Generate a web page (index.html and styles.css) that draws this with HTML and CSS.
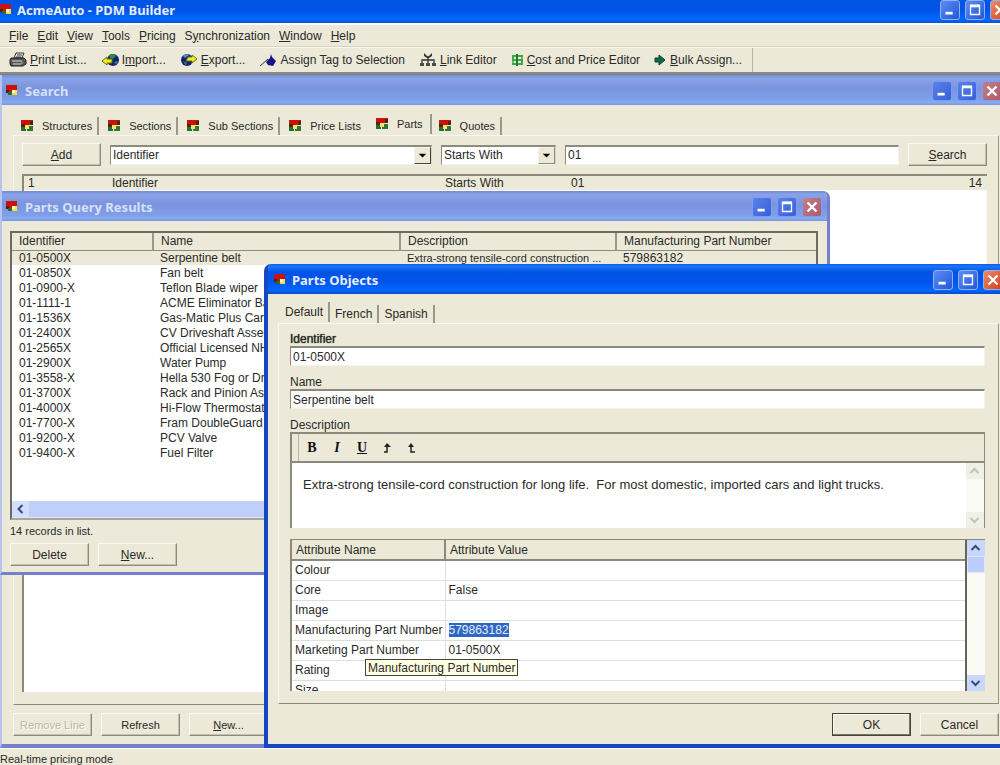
FILE: index.html
```html
<!DOCTYPE html>
<html lang="en">
<head>
<meta charset="utf-8">
<title>AcmeAuto - PDM Builder</title>
<link rel="stylesheet" href="styles.css">
</head>
<body>
<svg class="defs" aria-hidden="true">
  <symbol id="logo" viewBox="0 0 12 12"><path fill="#c81408" d="M0 0h11v5H7v3H0z"/><path fill="#5c1a08" d="M0 5h3v3H0z"/><path fill="#27702f" d="M2 7h4v3H2z"/><path fill="#ffd84a" d="M6 5h5v5H6z"/><path fill="#fff8d0" d="M6 5h3v3H6z"/></symbol>
  <symbol id="tabicon" viewBox="0 0 12 12"><path fill="#c81408" d="M0 0h12v5H0z"/><path fill="#5c2208" d="M0 4h4v3H0zM9 1h3v4H9z"/><path fill="#1f7038" d="M0 7h5v4H0z"/><path fill="#ffe06a" d="M4 5h4v4H4z"/><path fill="#2c7a30" d="M8 6h4v5H6V9h2z"/></symbol>
  <symbol id="min" viewBox="0 0 20 20"><path fill="#fff" d="M5 12h8v3H5z"/></symbol>
  <symbol id="max" viewBox="0 0 20 20"><path fill="none" stroke="#fff" stroke-width="1.500" d="M5 5h10v10H5z"/><path fill="#fff" d="M4.500 4h11v3h-11z"/></symbol>
  <symbol id="close" viewBox="0 0 20 20"><path fill="none" stroke="#fff" stroke-width="2.600" d="M5 5l10 10M15 5L5 15"/></symbol>
  <symbol id="drop" viewBox="0 0 16 16"><path d="M4 6h8l-4 4z"/></symbol>
</svg>

<div class="app">
  <header class="titlebar app-title">
    <svg class="logo"><use href="#logo"/></svg>
    <h1>AcmeAuto - PDM Builder</h1>
    <div class="controls">
      <button aria-label="Minimize"><svg><use href="#min"/></svg></button>
      <button aria-label="Maximize"><svg><use href="#max"/></svg></button>
      <button class="close" aria-label="Close"><svg><use href="#close"/></svg></button>
    </div>
  </header>

  <nav class="menubar">
    <button><u>F</u>ile</button><button><u>E</u>dit</button><button><u>V</u>iew</button><button><u>T</u>ools</button><button><u>P</u>ricing</button><button>S<u>y</u>nchronization</button><button><u>W</u>indow</button><button><u>H</u>elp</button>
  </nav>

  <div class="toolbar">
    <div class="tools">
      <button><svg viewBox="0 0 18 16"><path fill="#eee" stroke="#333" d="M5 6l2-5h8l-2 5z"/><path stroke="#333" d="M8 3h5M7 5h5"/><path fill="#555" stroke="#222" d="M2 6h13l2 2v4l-3 2H2l-1-2V8z"/><path stroke="#ddd" d="M3 9h10M4 12h8"/><path stroke="#c8c040" d="M12 11h2"/></svg><span><u>P</u>rint List...</span></button>
      <button><svg viewBox="0 0 18 16"><circle cx="12" cy="8" r="6" fill="#14207a"/><path fill="#2f8a3a" d="M8 3c3-2 6-1 7 1l-3 3-3-1zM13 10l4-1-2 4z"/><path fill="#f4ee20" stroke="#6c6a10" d="M1 9l5-4v2h5v4H6v2z"/></svg><span>I<u>m</u>port...</span></button>
      <button><svg viewBox="0 0 18 16"><circle cx="7" cy="8" r="6" fill="#14207a"/><path fill="#4f9cc0" d="M3 4c2-2 5-2 6-1L5 6z"/><path fill="#2f8a3a" d="M3 9l4 2-1 3z"/><path fill="#f4ee20" stroke="#6c6a10" d="M17 7l-5-4v2H8l-2 4h6v2z"/></svg><span><u>E</u>xport...</span></button>
      <button><svg viewBox="0 0 18 16"><path stroke="#333" d="M1 14L9 7"/><path fill="#16128c" d="M12 2l1 3 4 4-3 5-5-1-2-3 4-4z"/></svg><span>Assign Tag to Selection</span></button>
      <button><svg viewBox="0 0 18 16"><path fill="none" stroke="#333" stroke-width="1.300" d="M9 4v8M3 12V8h12v4"/><path fill="#333" d="M5 1l4 4 4-4v3l-3 2H8L5 4z"/><path fill="#445040" d="M1 11h4v3H1zM7 11h4v3H7zM13 11h4v3h-4z"/></svg><span><u>L</u>ink Editor</span></button>
      <button><svg class="narrow" viewBox="0 0 13 16"><path fill="none" stroke="#37ac44" stroke-width="2" d="M12 4H2v4h9v4H1"/><path fill="none" stroke="#37ac44" stroke-width="1.500" d="M11 4v8M2 4v8"/><path stroke="#1f7a2a" stroke-width="2" d="M6 2v12"/></svg><span><u>C</u>ost and Price Editor</span></button>
      <button><svg class="narrow" viewBox="0 0 13 16"><path fill="#0f6b4a" stroke="#063c30" d="M1 6h4V3l6 5-6 5v-3H1z"/></svg><span><u>B</u>ulk Assign...</span></button>
    </div>
  </div>

  <main class="workspace">
    <section class="window search-window">
      <header class="titlebar inactive">
        <svg class="logo"><use href="#logo"/></svg>
        <h2>Search</h2>
        <div class="controls">
          <button aria-label="Minimize"><svg><use href="#min"/></svg></button>
          <button aria-label="Maximize"><svg><use href="#max"/></svg></button>
          <button class="close" aria-label="Close"><svg><use href="#close"/></svg></button>
        </div>
      </header>
      <div class="search-body">
        <div class="tabs icon-tabs">
          <button><svg><use href="#tabicon"/></svg>Structures</button>
          <button><svg><use href="#tabicon"/></svg>Sections</button>
          <button><svg><use href="#tabicon"/></svg>Sub Sections</button>
          <button class="before"><svg><use href="#tabicon"/></svg>Price Lists</button>
          <button class="current"><svg><use href="#tabicon"/></svg>Parts</button>
          <button class="after"><svg><use href="#tabicon"/></svg>Quotes</button>
        </div>
        <div class="search-pane">
          <div class="criteria">
            <button class="btn"><span><u>A</u>dd</span></button>
            <div class="combo raised"><select aria-label="Field"><option>Identifier</option></select><svg><use href="#drop"/></svg></div>
            <div class="combo"><select aria-label="Operator"><option>Starts With</option></select><svg><use href="#drop"/></svg></div>
            <input class="field" aria-label="Value" value="01">
            <button class="btn"><span><u>S</u>earch</span></button>
          </div>
          <div class="criteria-list">
            <table>
              <colgroup><col class="c-num"><col class="c-field"><col class="c-op"><col><col class="c-count"></colgroup>
              <tr><td>1</td><td>Identifier</td><td>Starts With</td><td>01</td><td class="num">14</td></tr>
            </table>
          </div>
        </div>
        <div class="search-buttons">
          <button class="btn" disabled>Remove Line</button>
          <button class="btn">Refresh</button>
          <button class="btn"><span><u>N</u>ew...</span></button>
        </div>
      </div>
    </section>

    <section class="window query-window">
      <header class="titlebar inactive">
        <svg class="logo"><use href="#logo"/></svg>
        <h2>Parts Query Results</h2>
        <div class="controls">
          <button aria-label="Minimize"><svg><use href="#min"/></svg></button>
          <button aria-label="Maximize"><svg><use href="#max"/></svg></button>
          <button class="close" aria-label="Close"><svg><use href="#close"/></svg></button>
        </div>
      </header>
      <div class="query-body">
        <div class="results">
          <table>
            <colgroup><col class="r-id"><col class="r-name"><col class="r-desc"><col></colgroup>
            <thead><tr><th>Identifier</th><th>Name</th><th>Description</th><th>Manufacturing Part Number</th></tr></thead>
            <tbody>
              <tr class="chosen"><td>01-0500X</td><td>Serpentine belt</td><td class="summary">Extra-strong tensile-cord construction ...</td><td>579863182</td></tr>
              <tr><td>01-0850X</td><td>Fan belt</td><td></td><td></td></tr>
              <tr><td>01-0900-X</td><td>Teflon Blade wiper</td><td></td><td></td></tr>
              <tr><td>01-1111-1</td><td>ACME Eliminator Bat</td><td></td><td></td></tr>
              <tr><td>01-1536X</td><td>Gas-Matic Plus Car S</td><td></td><td></td></tr>
              <tr><td>01-2400X</td><td>CV Driveshaft Assem</td><td></td><td></td></tr>
              <tr><td>01-2565X</td><td>Official Licensed NH</td><td></td><td></td></tr>
              <tr><td>01-2900X</td><td>Water Pump</td><td></td><td></td></tr>
              <tr><td>01-3558-X</td><td>Hella 530 Fog or Driv</td><td></td><td></td></tr>
              <tr><td>01-3700X</td><td>Rack and Pinion Ass</td><td></td><td></td></tr>
              <tr><td>01-4000X</td><td>Hi-Flow Thermostat</td><td></td><td></td></tr>
              <tr><td>01-7700-X</td><td>Fram DoubleGuard O</td><td></td><td></td></tr>
              <tr><td>01-9200-X</td><td>PCV Valve</td><td></td><td></td></tr>
              <tr><td>01-9400-X</td><td>Fuel Filter</td><td></td><td></td></tr>
            </tbody>
          </table>
          <div class="hscroll"><button aria-label="Scroll left"><svg viewBox="0 0 16 16"><path d="M10 4L6 8l4 4"/></svg></button></div>
        </div>
        <p class="count">14 records in list.</p>
        <div class="query-buttons">
          <button class="btn">Delete</button>
          <button class="btn"><span><u>N</u>ew...</span></button>
        </div>
      </div>
    </section>

    <section class="window dialog">
      <header class="titlebar">
        <svg class="logo"><use href="#logo"/></svg>
        <h2>Parts Objects</h2>
        <div class="controls">
          <button aria-label="Minimize"><svg><use href="#min"/></svg></button>
          <button aria-label="Maximize"><svg><use href="#max"/></svg></button>
          <button class="close" aria-label="Close"><svg><use href="#close"/></svg></button>
        </div>
      </header>
      <div class="dialog-body">
        <div class="tabs lang-tabs">
          <button class="current">Default</button>
          <button>French</button>
          <button>Spanish</button>
        </div>
        <form class="dialog-pane">
          <label class="strong" for="ident">Identifier</label>
          <input class="field" id="ident" value="01-0500X">
          <label for="name">Name</label>
          <input class="field" id="name" value="Serpentine belt">
          <label for="desc">Description</label>
          <div class="editor">
            <div class="format">
              <button type="button"><b>B</b></button>
              <button type="button"><b><i>I</i></b></button>
              <button type="button"><b><u>U</u></b></button>
              <button type="button" aria-label="Superscript"><svg viewBox="0 0 12 12"><path fill="none" stroke="#222" stroke-width="1.500" d="M3 10h3V3"/><path fill="#222" d="M3 5h7L6 1z"/></svg></button>
              <button type="button" aria-label="Subscript"><svg viewBox="0 0 12 12"><path fill="none" stroke="#222" stroke-width="1.500" d="M5 3v7h4"/><path fill="#222" d="M2 5h6L5 1z"/></svg></button>
            </div>
            <div class="editor-text">
              <textarea id="desc">Extra-strong tensile-cord construction for long life.  For most domestic, imported cars and light trucks.</textarea>
              <div class="vscroll off">
                <button type="button" disabled aria-label="Scroll up"><svg viewBox="0 0 16 16"><path d="M4 10l4-4 4 4"/></svg></button>
                <button type="button" disabled aria-label="Scroll down"><svg viewBox="0 0 16 16"><path d="M4 6l4 4 4-4"/></svg></button>
              </div>
            </div>
          </div>
          <div class="attributes">
            <div class="attr-view">
              <table>
                <colgroup><col class="a-name"><col></colgroup>
                <thead><tr><th>Attribute Name</th><th>Attribute Value</th></tr></thead>
                <tbody>
                  <tr><td>Colour</td><td></td></tr>
                  <tr><td>Core</td><td>False</td></tr>
                  <tr><td>Image</td><td></td></tr>
                  <tr><td>Manufacturing Part Number</td><td><mark>579863182</mark></td></tr>
                  <tr><td>Marketing Part Number</td><td>01-0500X</td></tr>
                  <tr><td>Rating</td><td></td></tr>
                  <tr><td>Size</td><td></td></tr>
                </tbody>
              </table>
              <div class="tooltip" role="tooltip">Manufacturing Part Number</div>
            </div>
            <div class="vscroll">
              <button type="button" aria-label="Scroll up"><svg viewBox="0 0 16 16"><path d="M4 10l4-4 4 4"/></svg></button>
              <div class="thumb"></div>
              <button type="button" aria-label="Scroll down"><svg viewBox="0 0 16 16"><path d="M4 6l4 4 4-4"/></svg></button>
            </div>
          </div>
        </form>
        <div class="dialog-buttons">
          <button class="btn default">OK</button>
          <button class="btn">Cancel</button>
        </div>
      </div>
    </section>
  </main>

  <footer class="status">Real-time pricing mode</footer>
</div>
</body>
</html>
```
FILE: styles.css
```css
* { box-sizing: border-box; }
body {
  margin: 0;
  font: 12px/14px "Liberation Sans", Arial, sans-serif;
  color: #2a2a28;
  background: #ece9d8;
}
button, input, select, textarea { font: inherit; color: inherit; margin: 0; }
button { padding: 0; border: 0; background: none; white-space: nowrap; }
h1, h2, p { margin: 0; }
svg { display: block; flex: none; }
table { border-collapse: collapse; table-layout: fixed; width: 100%; }
td, th { padding: 0; text-align: left; font-weight: normal; white-space: nowrap; overflow: hidden; }
.defs { position: absolute; width: 0; height: 0; }

.app { display: flex; flex-direction: column; height: 100vh; min-height: 600px; overflow: hidden; }

/* title bars */
.titlebar {
  display: flex;
  flex: none;
  align-items: center;
  gap: 6px;
  height: 30px;
  padding: 2px 5px 0 6px;
  color: #fff;
  background: linear-gradient(#0a5ce8, #1c74f8 8%, #0053e4 28%, #0055ea 60%, #0068ff 88%, #0a48c8);
}
.titlebar h1, .titlebar h2 { flex: 1; font: bold 13px/18px "Noto Sans", sans-serif; color: #e4ecfd; }
.logo { width: 12px; height: 12px; }
.controls { display: flex; gap: 5px; }
.controls button {
  width: 20px;
  height: 20px;
  border: 1px solid #8fb2f6;
  border-radius: 3px;
  background: linear-gradient(135deg, #5c8df4, #2357d8);
}
.controls svg { width: 18px; height: 18px; }
.controls .close { background: linear-gradient(135deg, #f08a68, #d2401c); }
.app-title { height: 23px; margin-right: -11px; padding: 0 1px 4px 0; gap: 5px; background: linear-gradient(#0054e3, #0055e6 45%, #0068ff 85%, #0a55d0); }
.inactive { background: linear-gradient(#6f8cd8, #8aa2e6 12%, #7b94de 45%, #7f9fe8 80%, #86aaf0 92%, #7b94dc); }
.inactive h2 { color: #d6e0fa; }
.inactive .controls button { border-color: #7f9df0; background: linear-gradient(135deg, #5b82ea, #3560d8); }
.inactive .controls .close { background: linear-gradient(135deg, #c0808c, #b05868); }

/* menu and toolbar */
.menubar { display: flex; flex: none; align-items: center; gap: 9px; height: 24px; padding-left: 9px; border-top: 2px solid #fff; border-bottom: 1px solid #d8d4c2; }
.toolbar { flex: none; height: 27px; border-top: 1px solid #f8f6ee; border-bottom: 2px solid #8a8a84; }
.tools { display: flex; align-items: center; gap: 14px; width: max-content; height: 100%; padding: 0 10px 0 9px; border-right: 1px solid #b8b5a4; }
.tools button { display: flex; align-items: center; gap: 3px; }
.tools svg { width: 18px; height: 16px; }
.tools .narrow { width: 13px; }

/* common controls */
.btn {
  min-width: 79px;
  height: 23px;
  background: #ece9d8;
  border: 1px solid;
  border-color: #faf9f4 #8c8a7c #8c8a7c #faf9f4;
  box-shadow: inset -1px -1px #c4c1b0;
}
.btn:disabled { color: #b9b6a6; text-shadow: 1px 1px #fff; }
.btn.default { border: 1px solid #44443c; box-shadow: inset -1px -1px #77756a, inset 1px 1px #faf9f4; }
.field {
  width: 100%;
  min-width: 0;
  height: 20px;
  padding: 0 2px;
  border: 1px solid;
  border-color: #8c8a7c #f6f4ea #f6f4ea #8c8a7c;
  border-top-width: 2px;
  background: #fff;
  outline: 0;
}
.combo { position: relative; border: 1px solid; border-color: #8c8a7c #d8d5c6 #f6f4ea #8c8a7c; border-top-width: 2px; background: #fff; }
.combo select { display: block; width: 100%; height: 17px; padding: 0 20px 0 2px; border: 0; background: none; appearance: none; outline: 0; }
.combo svg { position: absolute; top: 0; right: 0; width: 17px; height: 17px; background: #ece9d8; border: 1px solid; border-color: #f6f4ea #8c8a7c #8c8a7c #f6f4ea; pointer-events: none; }
.combo.raised svg { border-color: #f6f4ea #44443c #44443c #f6f4ea; }

.tabs { display: flex; align-items: flex-end; }
.tabs button { display: flex; align-items: center; height: 18px; border-right: 2px solid #9a988a; }
.icon-tabs { padding-left: 8px; font-size: 11px; }
.icon-tabs button { gap: 9px; padding: 0 5px 0 9px; }
.icon-tabs button:first-child { padding-left: 0; }
.icon-tabs svg { width: 12px; height: 12px; }
.icon-tabs .before { border-right-color: transparent; }
.tabs .current { height: 20px; margin-bottom: 1px; }
.icon-tabs .current { padding: 0 7px 0 8px; }
.icon-tabs .after { padding-left: 7px; }

/* windows on the workspace */
.workspace { position: relative; flex: 1; min-height: 0; overflow: hidden; background: #808080; }
.window { position: absolute; display: flex; flex-direction: column; overflow: hidden; background: #ece9d8; }
.search-window { inset: 1px -7px 0 0; border-bottom: 4px solid #7480cc; border-left: 2px solid #b9c3f2; }
.query-window { inset: 117px 17% 173px 0; border: solid #7480cc; border-width: 0 3px 3px 2px; border-left-color: #b9c3f2; border-radius: 0 7px 0 0; }
.dialog { inset: 190px -8px 0 264px; border: solid #1546c4; border-width: 0 0 4px 4px; border-radius: 7px 0 0 0; }
.search-window .titlebar, .query-window .titlebar { gap: 7px; padding-left: 4px; }

.search-body { display: flex; flex: 1; flex-direction: column; min-height: 0; padding: 9px 8px 8px 11px; }
.search-pane { display: flex; flex: 1; flex-direction: column; min-height: 0; padding: 7px 11px 12px 8px; border: 1px solid; border-color: #f8f6ee #9a988a #8c8a7c #f8f6ee; }
.criteria { display: grid; grid-template-columns: 79px minmax(0, 322fr) minmax(0, 115fr) minmax(0, 334fr) 79px; align-items: center; gap: 9px; }
.criteria-list { flex: 1; min-height: 0; margin-top: 8px; overflow: hidden; border: solid #8c8a7c; border-width: 2px 0 0 2px; background: #fff; }
.criteria-list tr { height: 14px; background: #ece9d8; }
.criteria-list td { padding-left: 4px; }
.c-num { width: 84px; }
.c-field { width: 333px; }
.c-op { width: 126px; }
.c-count { width: 40px; }
.criteria-list .num { padding-right: 5px; text-align: right; }
.search-buttons, .query-buttons { display: flex; gap: 9px; padding-top: 8px; }
.search-buttons { font-size: 11px; }

.query-body { display: flex; flex: 1; flex-direction: column; min-height: 0; padding: 10px 9px 6px 8px; }
.results { display: flex; flex: 1; flex-direction: column; min-height: 0; border: 2px solid #6c6b62; border-bottom-color: #a8a698; background: #fff; }
.results th { height: 17px; padding-left: 7px; background: #ece9d8; border-right: 2px solid #9a988a; border-bottom: 1px solid #8c8a7c; }
.results th:last-child { border-right: 0; }
.results td { height: 15px; padding-left: 7px; }
.results .summary { font-size: 11px; }
.results .chosen { background: #ece9d8; }
.r-id { width: 141px; }
.r-name { width: 247px; }
.r-desc { width: 216px; }
.hscroll { height: 17px; margin-top: auto; background: #bfcffa; border-bottom: 1px solid #dfe6fb; }
.hscroll button { background: #d3defb; }
.hscroll svg, .vscroll svg { width: 17px; height: 16px; fill: none; stroke: #3a4a80; stroke-width: 2; }
.count { padding-top: 4px; font-size: 11px; }
.query-buttons { padding-top: 5px; }

.dialog-body { display: flex; flex: 1; flex-direction: column; min-height: 0; padding: 8px 9px 8px 10px; }
.lang-tabs { padding-left: 7px; }
.lang-tabs button { padding: 0 5px; }
.lang-tabs .current { padding-left: 0; }
.dialog-pane { display: flex; flex: 1; flex-direction: column; min-height: 0; padding: 8px 13px 12px 11px; border: 1px solid; border-color: #f8f6ee #9a988a #8c8a7c #f8f6ee; }
.dialog-pane .field { flex: none; margin-bottom: 9px; }
.strong { text-shadow: 0 0 1px #2a2a28; }
.editor { flex: none; border: solid #8c8a7c; border-width: 2px 1px 0 2px; }
.format { display: flex; align-items: center; gap: 13px; height: 27px; margin-left: 6px; padding-left: 7px; border-left: 1px solid #b8b5a4; font: 14px/16px "Liberation Serif", serif; color: #111; }
.format button { display: grid; place-items: center; width: 12px; height: 18px; }
.format svg { width: 12px; height: 12px; }
.editor-text { display: flex; height: 67px; border-top: 2px solid #8c8a7c; background: #fff; }
.editor-text textarea { flex: 1; min-width: 0; padding: 15px 11px; border: 0; background: none; resize: none; outline: 0; overflow: hidden; font-size: 13px; }
.vscroll { display: flex; flex: none; flex-direction: column; justify-content: space-between; width: 18px; background: #faf9f4; }
.vscroll button { background: #c9d7fc; }
.vscroll.off button { background: #f0efe8; }
.vscroll.off svg { stroke: #c4c2b6; }
.thumb { flex: 0 0 17px; margin-bottom: auto; background: #bccdfb; border: 1px solid #dfe7fd; }
.attributes { display: flex; flex: 1; min-height: 0; margin-top: 11px; overflow: hidden; border: solid #8c8a7c; border-width: 1px 0 0 2px; background: #fff; }
.attr-view { position: relative; flex: 1; min-width: 0; border-right: 2px solid #66655c; }
.attributes th { height: 20px; padding-left: 4px; background: #ece9d8; border-bottom: 2px solid #8c8a7c; }
.attributes th:first-child { border-right: 2px solid #8c8a7c; }
.attributes td { height: 20px; padding-left: 3px; border-bottom: 1px solid #dededc; }
.attributes td:first-child { border-right: 1px solid #dededc; }
.a-name { width: 153px; }
mark { color: #e4eefc; background: #2f66c4; }
.tooltip { position: absolute; top: 119px; left: 73px; height: 17px; padding: 1px 2px; border: 1px solid #44443c; background: #ffffe1; white-space: nowrap; line-height: 14px; }
.dialog-buttons { display: flex; justify-content: flex-end; gap: 9px; padding-top: 9px; }

.status { flex: none; height: 17px; padding-top: 3px; overflow: hidden; border-top: 1px solid #faf9f4; background: #ece9d8; font-size: 11px; }
```
